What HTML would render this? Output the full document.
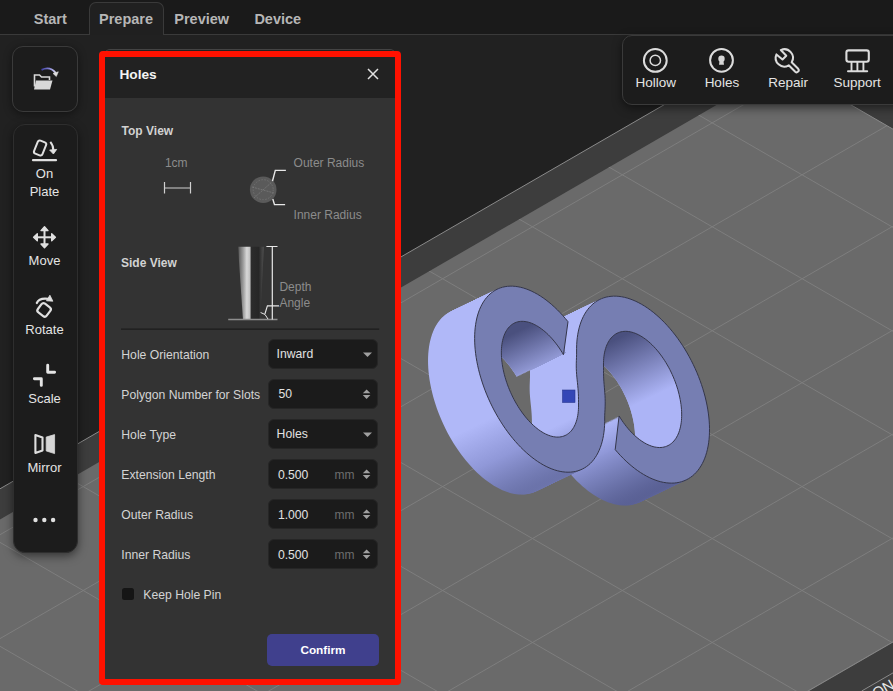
<!DOCTYPE html>
<html><head><meta charset="utf-8">
<style>
*{margin:0;padding:0;box-sizing:border-box}
html,body{width:893px;height:691px;overflow:hidden;background:#212121;font-family:"Liberation Sans",sans-serif}
.a{position:absolute;line-height:1;white-space:nowrap}
#hdr{position:absolute;left:0;top:0;width:893px;height:35px;background:#1a1a1a;border-bottom:1px solid #3a3a3a}
#tabp{position:absolute;left:89px;top:2px;width:75px;height:33px;background:#202020;border:1px solid #3a3a3a;border-bottom:none;border-radius:7px 7px 0 0}
.tab{font-size:14.5px;font-weight:bold;color:#b6b6b6;top:11.6px}
#openbtn{position:absolute;left:12px;top:46px;width:66px;height:66px;background:#1c1c1c;border:1px solid #3a3a3a;border-radius:11px;box-shadow:0 2px 8px rgba(0,0,0,.45)}
#tools{position:absolute;left:12.5px;top:124px;width:65px;height:429px;background:#1c1c1c;border:1px solid #2e2e2e;border-radius:12px;box-shadow:0 3px 10px rgba(0,0,0,.5)}
.tl{font-size:13px;color:#e4e4e4;left:12px;width:65px;text-align:center}
#rtool{position:absolute;left:622px;top:35px;width:290px;height:70px;background:#1c1c1c;border:1px solid #3a3a3a;border-radius:10px;box-shadow:0 3px 10px rgba(0,0,0,.5)}
.rl{font-size:13.5px;color:#e4e4e4;top:76.2px;width:60px;text-align:center}
#dlg{position:absolute;left:104px;top:49px;width:292px;height:634px;background:#333;border:1px solid #444;border-radius:6px;overflow:hidden}
#dlgh{position:absolute;left:0;top:0;width:100%;height:48px;background:#222}
#red{position:absolute;left:99px;top:51px;width:302px;height:634px;border:6px solid #ff1100;border-radius:4px}
.sec{font-size:12px;font-weight:bold;color:#d2d2d2}
.dim{font-size:12px;color:#8c8c8c}
.lab{font-size:12.2px;color:#d4d4d4;left:121.3px}
.box{position:absolute;left:268px;width:110px;height:30px;background:#1b1b1b;border-radius:6px;border:1px solid #262626}
.val{font-size:12.2px;color:#e2e2e2}
.mm{font-size:12px;color:#6e6e6e;left:334.6px}
</style></head><body>
<svg id="scene" width="893" height="691" viewBox="0 0 893 691" style="position:absolute;left:0;top:0"><polygon points="783.9,35.5 0.0,488.8 0.0,691.0 893.0,691.0 893.0,98.6" fill="#3d3d3d"/><polygon points="783.9,66.1 0.0,519.4 0.0,691.0 808.2,691.0 893.0,642.0 893.0,129.2" fill="#6a6a6a"/><clipPath id="pc"><polygon points="783.9,66.1 0.0,519.4 0.0,691.0 808.2,691.0 893.0,642.0 893.0,129.2"/></clipPath><g clip-path="url(#pc)" stroke="#7e7e7e" stroke-width="1"><line x1="0.0" y1="-1224.2" x2="893.0" y2="-707.9"/><line x1="0.0" y1="-504.5" x2="893.0" y2="-1020.9"/><line x1="0.0" y1="-1120.3" x2="893.0" y2="-603.9"/><line x1="0.0" y1="-400.6" x2="893.0" y2="-917.0"/><line x1="0.0" y1="-1016.4" x2="893.0" y2="-500.0"/><line x1="0.0" y1="-296.7" x2="893.0" y2="-813.0"/><line x1="0.0" y1="-912.5" x2="893.0" y2="-396.1"/><line x1="0.0" y1="-192.8" x2="893.0" y2="-709.1"/><line x1="0.0" y1="-808.5" x2="893.0" y2="-292.2"/><line x1="0.0" y1="-88.8" x2="893.0" y2="-605.2"/><line x1="0.0" y1="-704.6" x2="893.0" y2="-188.3"/><line x1="0.0" y1="15.1" x2="893.0" y2="-501.3"/><line x1="0.0" y1="-600.7" x2="893.0" y2="-84.3"/><line x1="0.0" y1="119.0" x2="893.0" y2="-397.4"/><line x1="0.0" y1="-496.8" x2="893.0" y2="19.6"/><line x1="0.0" y1="222.9" x2="893.0" y2="-293.4"/><line x1="0.0" y1="-392.9" x2="893.0" y2="123.5"/><line x1="0.0" y1="326.8" x2="893.0" y2="-189.5"/><line x1="0.0" y1="-288.9" x2="893.0" y2="227.4"/><line x1="0.0" y1="430.8" x2="893.0" y2="-85.6"/><line x1="0.0" y1="-185.0" x2="893.0" y2="331.3"/><line x1="0.0" y1="534.7" x2="893.0" y2="18.3"/><line x1="0.0" y1="-81.1" x2="893.0" y2="435.3"/><line x1="0.0" y1="638.6" x2="893.0" y2="122.2"/><line x1="0.0" y1="22.8" x2="893.0" y2="539.2"/><line x1="0.0" y1="742.5" x2="893.0" y2="226.2"/><line x1="0.0" y1="126.7" x2="893.0" y2="643.1"/><line x1="0.0" y1="846.4" x2="893.0" y2="330.1"/><line x1="0.0" y1="230.7" x2="893.0" y2="747.0"/><line x1="0.0" y1="950.4" x2="893.0" y2="434.0"/><line x1="0.0" y1="334.6" x2="893.0" y2="850.9"/><line x1="0.0" y1="1054.3" x2="893.0" y2="537.9"/><line x1="0.0" y1="438.5" x2="893.0" y2="954.9"/><line x1="0.0" y1="1158.2" x2="893.0" y2="641.8"/><line x1="0.0" y1="542.4" x2="893.0" y2="1058.8"/><line x1="0.0" y1="1262.1" x2="893.0" y2="745.8"/><line x1="0.0" y1="646.3" x2="893.0" y2="1162.7"/><line x1="0.0" y1="1366.0" x2="893.0" y2="849.7"/><line x1="0.0" y1="750.3" x2="893.0" y2="1266.6"/><line x1="0.0" y1="1470.0" x2="893.0" y2="953.6"/><line x1="0.0" y1="854.2" x2="893.0" y2="1370.5"/><line x1="0.0" y1="1573.9" x2="893.0" y2="1057.5"/><line x1="0.0" y1="958.1" x2="893.0" y2="1474.5"/><line x1="0.0" y1="1677.8" x2="893.0" y2="1161.4"/><line x1="0.0" y1="1062.0" x2="893.0" y2="1578.4"/><line x1="0.0" y1="1781.7" x2="893.0" y2="1265.4"/><line x1="0.0" y1="1165.9" x2="893.0" y2="1682.3"/><line x1="0.0" y1="1885.6" x2="893.0" y2="1369.3"/></g><line x1="0.0" y1="488.8" x2="783.9" y2="35.5" stroke="#8a8a8a" stroke-width="1"/><line x1="808.2" y1="691.0" x2="893.0" y2="642.0" stroke="#858585" stroke-width="1"/><line x1="783.9" y1="66.1" x2="893.0" y2="129.2" stroke="#8a8a8a" stroke-width="1"/><line x1="861.7" y1="691.0" x2="893.0" y2="672.9" stroke="#8a8a8a" stroke-width="1"/><text x="0" y="0" transform="translate(876,699) rotate(-30)" font-family="Liberation Sans" font-size="15" fill="#e8e8e8">ON</text><defs><path id="ff" d="M568.00,321.71 L565.40,318.55 L562.75,315.51 L560.06,312.59 L557.33,309.79 L554.56,307.14 L551.76,304.62 L548.94,302.25 L546.10,300.02 L543.25,297.95 L540.40,296.04 L537.54,294.28 L534.68,292.69 L531.84,291.27 L529.01,290.01 L526.20,288.93 L523.42,288.03 L520.66,287.30 L517.95,286.74 L515.28,286.37 L512.65,286.17 L510.08,286.16 L507.56,286.32 L505.11,286.66 L502.72,287.19 L500.40,287.89 L498.16,288.76 L496.00,289.81 L493.93,291.04 L491.94,292.43 L490.04,293.99 L488.24,295.72 L486.54,297.61 L484.95,299.65 L483.45,301.85 L482.07,304.20 L480.80,306.69 L479.64,309.32 L478.60,312.09 L477.67,314.99 L476.87,318.01 L476.19,321.15 L475.63,324.40 L475.19,327.76 L474.88,331.22 L474.69,334.76 L474.63,338.40 L474.70,342.11 L474.88,345.90 L475.20,349.75 L475.64,353.66 L476.20,357.61 L476.89,361.61 L477.70,365.64 L478.62,369.70 L479.67,373.78 L480.83,377.86 L482.10,381.95 L483.49,386.04 L484.98,390.11 L486.58,394.16 L488.29,398.18 L490.09,402.16 L491.99,406.10 L493.98,409.99 L496.05,413.82 L498.22,417.58 L500.46,421.26 L502.78,424.87 L505.17,428.39 L507.62,431.81 L510.14,435.13 L512.71,438.34 L515.34,441.44 L518.02,444.42 L520.73,447.27 L523.48,449.99 L526.27,452.57 L529.08,455.01 L531.91,457.31 L534.75,459.45 L537.61,461.44 L540.47,463.27 L543.32,464.94 L546.17,466.44 L549.01,467.78 L551.83,468.94 L554.63,469.93 L557.39,470.74 L560.13,471.38 L562.82,471.83 L565.47,472.11 L568.07,472.21 L570.61,472.13 L573.10,471.87 L575.52,471.44 L577.87,470.82 L580.14,470.03 L582.34,469.06 L584.46,467.91 L586.49,466.60 L588.43,465.12 L590.27,463.47 L592.02,461.65 L593.66,459.68 L595.20,457.56 L596.64,455.28 L597.96,452.85 L599.17,450.28 L600.27,447.58 L601.25,444.74 L602.11,441.78 L602.85,438.69 L603.47,435.49 L603.96,432.18 L604.33,428.77 L604.58,425.27 L604.70,421.67 L604.70,417.99 L604.72,415.21 L604.85,412.42 L605.00,409.63 L605.12,406.84 L605.20,404.05 L605.20,401.26 L605.14,398.47 L605.00,395.68 L604.81,392.89 L604.59,390.11 L604.35,387.32 L604.11,384.53 L603.90,381.74 L603.72,378.95 L603.60,376.16 L603.53,373.37 L603.50,370.58 L603.50,367.79 L603.49,365.00 L603.49,362.72 L603.58,360.49 L603.73,358.32 L603.96,356.21 L604.27,354.16 L604.64,352.17 L605.09,350.26 L605.62,348.42 L606.21,346.66 L606.87,344.99 L607.60,343.39 L608.39,341.89 L609.26,340.48 L610.18,339.15 L611.17,337.93 L612.22,336.80 L613.32,335.78 L614.48,334.85 L615.70,334.03 L616.96,333.32 L618.28,332.71 L619.64,332.22 L621.04,331.83 L622.49,331.55 L623.97,331.38 L625.49,331.32 L627.04,331.37 L628.63,331.54 L630.23,331.81 L631.87,332.20 L633.52,332.69 L635.19,333.29 L636.87,334.00 L638.57,334.81 L640.27,335.73 L641.98,336.76 L643.69,337.88 L645.39,339.10 L647.09,340.41 L648.79,341.82 L650.47,343.32 L652.13,344.91 L653.78,346.59 L655.40,348.34 L657.00,350.18 L658.58,352.09 L660.12,354.07 L661.63,356.11 L663.10,358.22 L664.54,360.39 L665.93,362.62 L667.28,364.90 L668.58,367.22 L669.83,369.59 L671.03,371.99 L672.17,374.43 L673.26,376.90 L674.29,379.39 L675.26,381.90 L676.16,384.42 L677.01,386.95 L677.78,389.49 L678.49,392.03 L679.13,394.56 L679.70,397.08 L680.20,399.59 L680.63,402.08 L680.99,404.55 L681.27,406.98 L681.48,409.38 L681.61,411.75 L681.67,414.07 L681.66,416.35 L681.57,418.57 L681.40,420.74 L681.17,422.84 L680.85,424.89 L680.47,426.86 L680.01,428.77 L679.48,430.60 L678.89,432.35 L678.22,434.02 L677.48,435.60 L676.68,437.10 L675.81,438.50 L674.88,439.81 L673.89,441.03 L672.83,442.15 L671.72,443.16 L670.56,444.07 L669.34,444.88 L668.07,445.59 L666.75,446.18 L665.38,446.67 L663.97,447.05 L662.52,447.32 L661.03,447.47 L659.51,447.52 L657.95,447.46 L656.37,447.28 L654.76,447.00 L653.12,446.60 L651.47,446.10 L649.80,445.48 L648.11,444.76 L646.42,443.94 L644.71,443.01 L643.01,441.98 L641.30,440.85 L639.59,439.62 L637.89,438.29 L636.20,436.87 L634.52,435.36 L632.86,433.76 L631.21,432.08 L629.59,430.32 L627.99,428.48 L626.42,426.56 L624.88,424.57 L623.38,422.52 L621.91,420.40 L620.48,418.23 L619.09,415.99 L615.21,449.63 L617.88,452.71 L620.60,455.68 L623.36,458.51 L626.16,461.22 L629.00,463.79 L631.86,466.21 L634.74,468.49 L637.64,470.62 L640.54,472.59 L643.46,474.40 L646.37,476.05 L649.28,477.53 L652.17,478.84 L655.05,479.99 L657.90,480.96 L660.73,481.75 L663.52,482.37 L666.27,482.80 L668.98,483.06 L671.63,483.14 L674.23,483.05 L676.78,482.77 L679.25,482.31 L681.66,481.67 L684.00,480.86 L686.25,479.87 L688.42,478.71 L690.51,477.38 L692.50,475.88 L694.40,474.21 L696.20,472.38 L697.90,470.39 L699.49,468.25 L700.97,465.96 L702.35,463.52 L703.61,460.93 L704.75,458.21 L705.77,455.36 L706.68,452.39 L707.46,449.29 L708.11,446.07 L708.65,442.75 L709.05,439.33 L709.33,435.81 L709.48,432.20 L709.51,428.52 L709.41,424.75 L709.18,420.92 L708.82,417.03 L708.33,413.09 L707.72,409.10 L706.99,405.07 L706.13,401.01 L705.16,396.94 L704.06,392.85 L702.84,388.75 L701.51,384.65 L700.07,380.56 L698.52,376.50 L696.86,372.45 L695.10,368.44 L693.24,364.47 L691.28,360.55 L689.23,356.68 L687.09,352.88 L684.87,349.15 L682.57,345.50 L680.19,341.93 L677.74,338.45 L675.22,335.07 L672.64,331.80 L670.00,328.63 L667.31,325.59 L664.58,322.66 L661.80,319.87 L658.99,317.21 L656.15,314.69 L653.28,312.31 L650.39,310.08 L647.49,308.01 L644.58,306.09 L641.66,304.33 L638.75,302.74 L635.85,301.31 L632.96,300.05 L630.09,298.97 L627.25,298.05 L624.43,297.32 L621.65,296.76 L618.92,296.38 L616.22,296.18 L613.59,296.16 L611.00,296.32 L608.48,296.66 L606.03,297.17 L603.64,297.87 L601.33,298.74 L599.11,299.78 L596.96,301.00 L594.91,302.39 L592.94,303.95 L591.08,305.67 L589.31,307.55 L587.65,309.59 L586.09,311.78 L584.64,314.13 L583.31,316.61 L582.09,319.24 L580.98,322.01 L580.00,324.90 L579.14,327.92 L578.40,331.05 L577.78,334.30 L577.29,337.66 L576.92,341.12 L576.69,344.66 L576.58,348.30 L576.60,352.01 L576.58,354.79 L576.49,357.58 L576.38,360.37 L576.29,363.16 L576.27,365.95 L576.31,368.74 L576.43,371.53 L576.62,374.32 L576.87,377.11 L577.15,379.89 L577.44,382.68 L577.73,385.47 L577.98,388.26 L578.20,391.05 L578.36,393.84 L578.46,396.63 L578.50,399.42 L578.51,402.21 L578.53,404.99 L578.52,407.23 L578.43,409.42 L578.28,411.55 L578.04,413.62 L577.74,415.63 L577.36,417.56 L576.91,419.42 L576.39,421.21 L575.80,422.91 L575.15,424.53 L574.42,426.06 L573.63,427.50 L572.77,428.85 L571.86,430.11 L570.88,431.27 L569.84,432.33 L568.74,433.28 L567.59,434.13 L566.38,434.88 L565.13,435.52 L563.83,436.06 L562.48,436.48 L561.08,436.80 L559.65,437.00 L558.18,437.09 L556.68,437.08 L555.14,436.95 L553.57,436.71 L551.98,436.36 L550.36,435.90 L548.73,435.34 L547.08,434.66 L545.41,433.88 L543.73,433.00 L542.05,432.01 L540.36,430.92 L538.67,429.73 L536.99,428.44 L535.31,427.07 L533.64,425.59 L531.98,424.03 L530.33,422.39 L528.71,420.66 L527.10,418.85 L525.52,416.97 L523.97,415.01 L522.45,412.99 L520.96,410.90 L519.51,408.75 L518.10,406.54 L516.73,404.28 L515.40,401.97 L514.12,399.62 L512.89,397.23 L511.71,394.81 L510.59,392.36 L509.52,389.88 L508.51,387.38 L507.56,384.86 L506.68,382.34 L505.85,379.80 L505.10,377.27 L504.40,374.74 L503.78,372.22 L503.23,369.71 L502.74,367.22 L502.33,364.76 L501.99,362.32 L501.72,359.91 L501.53,357.54 L501.41,355.21 L501.36,352.93 L501.39,350.70 L501.49,348.52 L501.66,346.40 L501.91,344.35 L502.23,342.36 L502.63,340.44 L503.09,338.60 L503.62,336.83 L504.23,335.15 L504.90,333.55 L505.64,332.03 L506.45,330.61 L507.32,329.28 L508.25,328.05 L509.24,326.91 L510.30,325.88 L511.40,324.94 L512.57,324.11 L513.78,323.39 L515.05,322.77 L516.36,322.26 L517.72,321.86 L519.12,321.57 L520.56,321.39 L522.04,321.32 L523.56,321.36 L525.10,321.52 L526.67,321.78 L528.27,322.15 L529.89,322.63 L531.53,323.23 L533.19,323.92 L534.85,324.73 L536.53,325.63 L538.22,326.65 L539.91,327.76 L541.59,328.97 L543.28,330.27 L544.96,331.67 L546.63,333.16 L548.28,334.74 L549.92,336.41 L551.55,338.15 L553.14,339.98 L554.72,341.88 L556.26,343.85 L557.78,345.89 L559.26,347.99 L560.70,350.16 L562.10,352.38 L563.47,354.65 Z"/><linearGradient id="gA" gradientUnits="userSpaceOnUse" x1="0" y1="415" x2="0" y2="492"><stop offset="0" stop-color="#b0b8f8"/><stop offset="0.42" stop-color="#9098d8"/><stop offset="0.7" stop-color="#7078b0"/><stop offset="1" stop-color="#4c5284"/></linearGradient><linearGradient id="gB" gradientUnits="userSpaceOnUse" x1="528" y1="326" x2="548" y2="374"><stop offset="0" stop-color="#4a507e"/><stop offset="1" stop-color="#a8b0f0"/></linearGradient><linearGradient id="gC" gradientUnits="userSpaceOnUse" x1="620" y1="337" x2="648" y2="398"><stop offset="0" stop-color="#4a507e"/><stop offset="1" stop-color="#acb4f6"/></linearGradient><clipPath id="lhc"><path d="M565.35,352.68 L563.88,350.23 L562.36,347.83 L560.81,345.50 L559.21,343.23 L557.57,341.03 L555.91,338.90 L554.21,336.85 L552.48,334.88 L550.73,332.99 L548.96,331.20 L547.17,329.49 L545.37,327.88 L543.56,326.37 L541.74,324.96 L539.92,323.65 L538.10,322.45 L536.28,321.36 L534.47,320.38 L532.66,319.51 L530.88,318.75 L529.11,318.12 L527.36,317.59 L525.63,317.19 L523.94,316.90 L522.27,316.74 L520.63,316.69 L519.04,316.76 L517.48,316.96 L515.97,317.27 L514.50,317.70 L513.08,318.24 L511.72,318.91 L510.40,319.69 L509.15,320.58 L507.95,321.59 L506.81,322.70 L505.74,323.93 L504.73,325.26 L503.79,326.69 L502.92,328.22 L502.12,329.85 L501.39,331.58 L500.73,333.39 L500.16,335.30 L499.65,337.29 L499.23,339.35 L498.88,341.50 L498.61,343.72 L498.42,346.00 L498.31,348.35 L498.27,350.76 L498.32,353.22 L498.45,355.73 L498.66,358.28 L498.94,360.88 L499.31,363.51 L499.75,366.17 L500.27,368.86 L500.87,371.57 L501.54,374.29 L502.28,377.02 L503.10,379.75 L503.98,382.48 L499.82,355.38 L516.87,377.05 Z"/></clipPath><clipPath id="rhc"><path d="M617.68,417.59 L616.26,415.17 L614.89,412.71 L613.57,410.20 L612.31,407.65 L611.10,405.07 L609.95,402.45 L608.87,399.82 L607.85,397.16 L606.90,394.49 L606.01,391.80 L605.20,389.12 L604.45,386.43 L603.78,383.75 L603.18,381.08 L602.66,378.43 L602.21,375.79 L601.84,373.19 L601.55,370.61 L601.33,368.07 L601.19,365.57 L601.14,363.12 L601.16,360.71 L601.26,358.36 L601.44,356.07 L601.69,353.85 L602.03,351.69 L602.44,349.60 L602.93,347.59 L603.49,345.66 L604.13,343.81 L604.84,342.05 L605.63,340.38 L606.48,338.80 L607.40,337.32 L608.39,335.93 L609.45,334.65 L610.56,333.48 L611.74,332.41 L612.98,331.45 L614.27,330.59 L615.62,329.86 L617.02,329.23 L618.47,328.72 L619.96,328.32 L621.50,328.04 L623.07,327.88 L624.69,327.84 L626.34,327.91 L628.01,328.10 L629.72,328.40 L631.45,328.82 L633.20,329.36 L634.97,330.01 L636.76,330.78 L638.55,331.65 L640.36,332.64 L642.16,333.73 L643.97,334.93 L645.78,336.24 L647.58,337.64 L649.36,339.15 L651.14,340.75 L652.90,342.44 L654.64,344.22 L656.36,346.09 L658.05,348.04 L659.72,350.07 L661.35,352.17 L662.94,354.35 L664.49,356.59 L666.01,358.89 L667.48,361.25 L668.90,363.67 L670.27,366.13 L671.59,368.64 L672.85,371.19 L674.06,373.78 L675.20,376.39 L676.29,379.03 L677.31,381.68 L678.26,384.36 L679.15,387.04 L679.96,389.72 L680.71,392.41 L681.38,395.09 L681.98,397.76 L682.50,400.41 L682.95,403.05 L683.32,405.65 L683.61,408.23 L683.83,410.77 L683.96,413.27 L684.02,415.72 L684.00,418.13 L683.90,420.48 L683.72,422.77 L683.46,424.99 L683.13,427.15 L682.72,429.24 L682.23,431.25 L681.66,433.18 L681.02,435.03 L680.31,436.79 L679.53,438.46 L678.68,440.04 L677.75,441.52 L676.76,442.91 L675.71,444.19 L674.59,445.36 L673.41,446.43 L672.18,447.40 L670.88,448.25 L669.53,448.99 L668.14,449.61 L666.69,450.12 L665.20,450.52 L663.66,450.80 L662.08,450.96 L660.47,451.01 L658.82,450.93 L657.14,450.75 L655.44,450.44 L653.71,450.02 L651.95,449.48 L650.18,448.83 L648.40,448.06 L646.60,447.19 L644.80,446.20 L642.99,445.11 L641.19,443.91 L639.38,442.60 L637.58,441.20 L635.79,439.69 L634.01,438.09 L632.25,436.40 L630.51,434.62 L628.80,432.75 L627.10,430.80 L625.44,428.77 L623.81,426.67 L622.22,424.50 L620.66,422.25 L619.15,419.95 L617.68,417.59 Z"/></clipPath></defs><g fill="url(#gA)"><use href="#ff" x="-46.60" y="22.40"/><use href="#ff" x="-45.77" y="22.00"/><use href="#ff" x="-44.94" y="21.60"/><use href="#ff" x="-44.10" y="21.20"/><use href="#ff" x="-43.27" y="20.80"/><use href="#ff" x="-42.44" y="20.40"/><use href="#ff" x="-41.61" y="20.00"/><use href="#ff" x="-40.77" y="19.60"/><use href="#ff" x="-39.94" y="19.20"/><use href="#ff" x="-39.11" y="18.80"/><use href="#ff" x="-38.28" y="18.40"/><use href="#ff" x="-37.45" y="18.00"/><use href="#ff" x="-36.61" y="17.60"/><use href="#ff" x="-35.78" y="17.20"/><use href="#ff" x="-34.95" y="16.80"/><use href="#ff" x="-34.12" y="16.40"/><use href="#ff" x="-33.29" y="16.00"/><use href="#ff" x="-32.45" y="15.60"/><use href="#ff" x="-31.62" y="15.20"/><use href="#ff" x="-30.79" y="14.80"/><use href="#ff" x="-29.96" y="14.40"/><use href="#ff" x="-29.12" y="14.00"/><use href="#ff" x="-28.29" y="13.60"/><use href="#ff" x="-27.46" y="13.20"/><use href="#ff" x="-26.63" y="12.80"/><use href="#ff" x="-25.80" y="12.40"/><use href="#ff" x="-24.96" y="12.00"/><use href="#ff" x="-24.13" y="11.60"/><use href="#ff" x="-23.30" y="11.20"/><use href="#ff" x="-22.47" y="10.80"/><use href="#ff" x="-21.64" y="10.40"/><use href="#ff" x="-20.80" y="10.00"/><use href="#ff" x="-19.97" y="9.60"/><use href="#ff" x="-19.14" y="9.20"/><use href="#ff" x="-18.31" y="8.80"/><use href="#ff" x="-17.48" y="8.40"/><use href="#ff" x="-16.64" y="8.00"/><use href="#ff" x="-15.81" y="7.60"/><use href="#ff" x="-14.98" y="7.20"/><use href="#ff" x="-14.15" y="6.80"/><use href="#ff" x="-13.31" y="6.40"/><use href="#ff" x="-12.48" y="6.00"/><use href="#ff" x="-11.65" y="5.60"/><use href="#ff" x="-10.82" y="5.20"/><use href="#ff" x="-9.99" y="4.80"/><use href="#ff" x="-9.15" y="4.40"/><use href="#ff" x="-8.32" y="4.00"/><use href="#ff" x="-7.49" y="3.60"/><use href="#ff" x="-6.66" y="3.20"/><use href="#ff" x="-5.83" y="2.80"/><use href="#ff" x="-4.99" y="2.40"/><use href="#ff" x="-4.16" y="2.00"/><use href="#ff" x="-3.33" y="1.60"/><use href="#ff" x="-2.50" y="1.20"/><use href="#ff" x="-1.66" y="0.80"/><use href="#ff" x="-0.83" y="0.40"/></g><g clip-path="url(#lhc)"><g fill="url(#gB)"><use href="#ff" x="-46.60" y="22.40"/><use href="#ff" x="-45.77" y="22.00"/><use href="#ff" x="-44.94" y="21.60"/><use href="#ff" x="-44.10" y="21.20"/><use href="#ff" x="-43.27" y="20.80"/><use href="#ff" x="-42.44" y="20.40"/><use href="#ff" x="-41.61" y="20.00"/><use href="#ff" x="-40.77" y="19.60"/><use href="#ff" x="-39.94" y="19.20"/><use href="#ff" x="-39.11" y="18.80"/><use href="#ff" x="-38.28" y="18.40"/><use href="#ff" x="-37.45" y="18.00"/><use href="#ff" x="-36.61" y="17.60"/><use href="#ff" x="-35.78" y="17.20"/><use href="#ff" x="-34.95" y="16.80"/><use href="#ff" x="-34.12" y="16.40"/><use href="#ff" x="-33.29" y="16.00"/><use href="#ff" x="-32.45" y="15.60"/><use href="#ff" x="-31.62" y="15.20"/><use href="#ff" x="-30.79" y="14.80"/><use href="#ff" x="-29.96" y="14.40"/><use href="#ff" x="-29.12" y="14.00"/><use href="#ff" x="-28.29" y="13.60"/><use href="#ff" x="-27.46" y="13.20"/><use href="#ff" x="-26.63" y="12.80"/><use href="#ff" x="-25.80" y="12.40"/><use href="#ff" x="-24.96" y="12.00"/><use href="#ff" x="-24.13" y="11.60"/><use href="#ff" x="-23.30" y="11.20"/><use href="#ff" x="-22.47" y="10.80"/><use href="#ff" x="-21.64" y="10.40"/><use href="#ff" x="-20.80" y="10.00"/><use href="#ff" x="-19.97" y="9.60"/><use href="#ff" x="-19.14" y="9.20"/><use href="#ff" x="-18.31" y="8.80"/><use href="#ff" x="-17.48" y="8.40"/><use href="#ff" x="-16.64" y="8.00"/><use href="#ff" x="-15.81" y="7.60"/><use href="#ff" x="-14.98" y="7.20"/><use href="#ff" x="-14.15" y="6.80"/><use href="#ff" x="-13.31" y="6.40"/><use href="#ff" x="-12.48" y="6.00"/><use href="#ff" x="-11.65" y="5.60"/><use href="#ff" x="-10.82" y="5.20"/><use href="#ff" x="-9.99" y="4.80"/><use href="#ff" x="-9.15" y="4.40"/><use href="#ff" x="-8.32" y="4.00"/><use href="#ff" x="-7.49" y="3.60"/><use href="#ff" x="-6.66" y="3.20"/><use href="#ff" x="-5.83" y="2.80"/><use href="#ff" x="-4.99" y="2.40"/><use href="#ff" x="-4.16" y="2.00"/><use href="#ff" x="-3.33" y="1.60"/><use href="#ff" x="-2.50" y="1.20"/><use href="#ff" x="-1.66" y="0.80"/><use href="#ff" x="-0.83" y="0.40"/></g></g><g clip-path="url(#rhc)"><g fill="url(#gC)"><use href="#ff" x="-46.60" y="22.40"/><use href="#ff" x="-45.77" y="22.00"/><use href="#ff" x="-44.94" y="21.60"/><use href="#ff" x="-44.10" y="21.20"/><use href="#ff" x="-43.27" y="20.80"/><use href="#ff" x="-42.44" y="20.40"/><use href="#ff" x="-41.61" y="20.00"/><use href="#ff" x="-40.77" y="19.60"/><use href="#ff" x="-39.94" y="19.20"/><use href="#ff" x="-39.11" y="18.80"/><use href="#ff" x="-38.28" y="18.40"/><use href="#ff" x="-37.45" y="18.00"/><use href="#ff" x="-36.61" y="17.60"/><use href="#ff" x="-35.78" y="17.20"/><use href="#ff" x="-34.95" y="16.80"/><use href="#ff" x="-34.12" y="16.40"/><use href="#ff" x="-33.29" y="16.00"/><use href="#ff" x="-32.45" y="15.60"/><use href="#ff" x="-31.62" y="15.20"/><use href="#ff" x="-30.79" y="14.80"/><use href="#ff" x="-29.96" y="14.40"/><use href="#ff" x="-29.12" y="14.00"/><use href="#ff" x="-28.29" y="13.60"/><use href="#ff" x="-27.46" y="13.20"/><use href="#ff" x="-26.63" y="12.80"/><use href="#ff" x="-25.80" y="12.40"/><use href="#ff" x="-24.96" y="12.00"/><use href="#ff" x="-24.13" y="11.60"/><use href="#ff" x="-23.30" y="11.20"/><use href="#ff" x="-22.47" y="10.80"/><use href="#ff" x="-21.64" y="10.40"/><use href="#ff" x="-20.80" y="10.00"/><use href="#ff" x="-19.97" y="9.60"/><use href="#ff" x="-19.14" y="9.20"/><use href="#ff" x="-18.31" y="8.80"/><use href="#ff" x="-17.48" y="8.40"/><use href="#ff" x="-16.64" y="8.00"/><use href="#ff" x="-15.81" y="7.60"/><use href="#ff" x="-14.98" y="7.20"/><use href="#ff" x="-14.15" y="6.80"/><use href="#ff" x="-13.31" y="6.40"/><use href="#ff" x="-12.48" y="6.00"/><use href="#ff" x="-11.65" y="5.60"/><use href="#ff" x="-10.82" y="5.20"/><use href="#ff" x="-9.99" y="4.80"/><use href="#ff" x="-9.15" y="4.40"/><use href="#ff" x="-8.32" y="4.00"/><use href="#ff" x="-7.49" y="3.60"/><use href="#ff" x="-6.66" y="3.20"/><use href="#ff" x="-5.83" y="2.80"/><use href="#ff" x="-4.99" y="2.40"/><use href="#ff" x="-4.16" y="2.00"/><use href="#ff" x="-3.33" y="1.60"/><use href="#ff" x="-2.50" y="1.20"/><use href="#ff" x="-1.66" y="0.80"/><use href="#ff" x="-0.83" y="0.40"/></g></g><use href="#ff" fill="#767eb2" stroke="#34364a" stroke-width="1"/><rect x="562.5" y="390" width="12.5" height="12.5" fill="#3446b6" stroke="#2a3890" stroke-width="0.6"/></svg>
<div id="hdr"></div>
<div id="tabp"></div>
<span class="a tab" style="left:33.8px">Start</span>
<span class="a tab" style="left:99px">Prepare</span>
<span class="a tab" style="left:174.3px">Preview</span>
<span class="a tab" style="left:254.4px">Device</span>

<div id="openbtn"></div>
<div id="tools"></div>
<div id="rtool"></div>

<svg width="893" height="691" style="position:absolute;left:0;top:0">
 <defs>
  <linearGradient id="arr" x1="0" y1="0" x2="1" y2="0"><stop offset="0" stop-color="#3c3ca0"/><stop offset="0.6" stop-color="#8a8ad8"/><stop offset="1" stop-color="#dcdcf0"/></linearGradient>
 </defs>
 <!-- open icon -->
 <path d="M34.5,86.5 V75 h5 l2,2 h8 v3" fill="none" stroke="#d8d8d8" stroke-width="1.6"/>
 <path d="M36,80.5 H52.5 L50,89.5 H34 Z" fill="#d8d8d8"/>
 <path d="M41.5,69.8 Q50,65.8 55.8,73" fill="none" stroke="url(#arr)" stroke-width="1.9"/>
 <path d="M53,73.4 L58.3,71.8 L56.3,76.5 Z" fill="#dcdcdc" stroke="#dcdcdc" stroke-width="0.6" stroke-linejoin="round"/>
 <!-- on plate -->
 <rect x="35.6" y="141" width="9" height="14" rx="2.2" transform="rotate(22 40.1 148)" fill="none" stroke="#e0e0e0" stroke-width="2"/>
 <path d="M50.3,141.8 Q53.5,145.5 53.3,150.5" fill="none" stroke="#e0e0e0" stroke-width="2"/>
 <path d="M49.6,150 L56.7,149.4 L53.4,154 Z" fill="#e0e0e0" stroke="#e0e0e0" stroke-width="0.8" stroke-linejoin="round"/>
 <line x1="33" y1="160.2" x2="56" y2="160.2" stroke="#e0e0e0" stroke-width="2.2" stroke-linecap="round"/>
 <!-- move -->
 <g stroke="#e0e0e0" fill="#e0e0e0" stroke-linejoin="round">
  <line x1="44.5" y1="229" x2="44.5" y2="246" stroke-width="2"/><line x1="35" y1="237.3" x2="54" y2="237.3" stroke-width="2"/>
  <path d="M41,230.6 L44.5,226.8 L48,230.6 Z" stroke-width="1.4"/>
  <path d="M41,244 L44.5,247.8 L48,244 Z" stroke-width="1.4"/>
  <path d="M37.3,233.8 L33.6,237.3 L37.3,240.8 Z" stroke-width="1.4"/>
  <path d="M51.7,233.8 L55.4,237.3 L51.7,240.8 Z" stroke-width="1.4"/>
 </g>
 <!-- rotate -->
 <rect x="38.6" y="304.4" width="11" height="11" rx="2.5" transform="rotate(37 44.1 309.9)" fill="none" stroke="#e0e0e0" stroke-width="2.2"/>
 <path d="M36.8,303 Q39,297.5 48.5,298.8" fill="none" stroke="#e0e0e0" stroke-width="2.2" stroke-linecap="round"/>
 <path d="M46.5,300.8 L49.9,295.2 L52.9,301.2 Z" fill="#e0e0e0" stroke="#e0e0e0" stroke-width="0.8" stroke-linejoin="round"/>
 <!-- scale -->
 <path d="M47.7,365.2 V372.3 H54.6" fill="none" stroke="#e4e4e4" stroke-width="2.9" stroke-linecap="round" stroke-linejoin="round"/>
 <path d="M34.4,378.7 H41.3 V385.4" fill="none" stroke="#e4e4e4" stroke-width="2.9" stroke-linecap="round" stroke-linejoin="round"/>
 <!-- mirror -->
 <path d="M35.4,435 L42.5,437.6 V450.4 L35.4,453 Z" fill="none" stroke="#dedede" stroke-width="2.1" stroke-linejoin="round"/>
 <path d="M46.2,437.1 L54.6,434.6 V453.6 L46.2,450.9 Z" fill="#d6d6d6" stroke="#d6d6d6" stroke-width="0.8" stroke-linejoin="round"/>
 <circle cx="35.5" cy="520" r="2.2" fill="#e0e0e0"/><circle cx="44.3" cy="520" r="2.2" fill="#e0e0e0"/><circle cx="53.1" cy="520" r="2.2" fill="#e0e0e0"/>
 <!-- right toolbar icons -->
 <circle cx="655.3" cy="60.4" r="11.4" fill="none" stroke="#dcdcdc" stroke-width="2"/>
 <circle cx="655.3" cy="60.4" r="5.2" fill="none" stroke="#dcdcdc" stroke-width="1.5"/>
 <circle cx="721.5" cy="60.3" r="11.4" fill="none" stroke="#dcdcdc" stroke-width="2"/>
 <circle cx="721.5" cy="58.7" r="3.2" fill="#d6d6d6"/>
 <path d="M719.7,60 L719,64.8 H724 L723.3,60 Z" fill="#d6d6d6"/>
 <path d="M780.8,50.04 A8.6,8.6 0 0 1 791.68,62.32 L798.18,68.82 A2.1,2.1 0 0 1 795.22,71.78 L788.72,65.28 A8.6,8.6 0 0 1 776.44,54.4 L782.5,59.5 L786.3,55.7 Z" fill="none" stroke="#dcdcdc" stroke-width="2" stroke-linejoin="round"/>
 <rect x="846.4" y="50.4" width="22.4" height="11.4" rx="2.2" fill="none" stroke="#dcdcdc" stroke-width="2.1"/>
 <line x1="851.5" y1="61.5" x2="851.5" y2="71" stroke="#dcdcdc" stroke-width="1.9"/>
 <line x1="857.4" y1="61.5" x2="857.4" y2="71" stroke="#dcdcdc" stroke-width="1.9"/>
 <line x1="863.4" y1="61.5" x2="863.4" y2="71" stroke="#dcdcdc" stroke-width="1.9"/>
 <line x1="848" y1="71.2" x2="867.2" y2="71.2" stroke="#dcdcdc" stroke-width="2" stroke-linecap="round"/>
</svg>

<span class="a tl" style="top:166.8px">On</span>
<span class="a tl" style="top:184.8px">Plate</span>
<span class="a tl" style="top:253.5px">Move</span>
<span class="a tl" style="top:322.6px">Rotate</span>
<span class="a tl" style="top:391.5px">Scale</span>
<span class="a tl" style="top:461px">Mirror</span>

<span class="a rl" style="left:625.7px">Hollow</span>
<span class="a rl" style="left:691.9px">Holes</span>
<span class="a rl" style="left:758.1px">Repair</span>
<span class="a rl" style="left:827.2px">Support</span>

<div id="dlg"><div id="dlgh"></div></div>
<span class="a" style="left:119.4px;top:68.4px;font-size:13.7px;font-weight:bold;color:#f4f4f4">Holes</span>
<svg width="893" height="691" style="position:absolute;left:0;top:0">
 <path d="M368,69 L378,79 M378,69 L368,79" stroke="#e0e0e0" stroke-width="1.5"/>
 <!-- scale bar -->
 <path d="M164.5,182 V193.5 M190.5,182 V193.5 M164.5,188 H190.5" stroke="#d0d0d0" stroke-width="1.2" fill="none"/>
 <!-- circle -->
 <circle cx="263.2" cy="189.7" r="13.3" fill="#5a5a5a"/>
 <circle cx="263.2" cy="189.7" r="10" fill="none" stroke="#7a7a7a" stroke-width="0.7" stroke-dasharray="1.5 1.5"/>
 <path d="M254,198 L272.5,181.5 M252,187 L274,193" stroke="#7e7e7e" stroke-width="0.7" stroke-dasharray="2 1"/>
 <path d="M285.9,170.4 H275.3 L272.5,181" fill="none" stroke="#e8e8e8" stroke-width="1.4"/>
 <path d="M272.8,199 L274.5,204.6 H285.1" fill="none" stroke="#e8e8e8" stroke-width="1.4"/>
 <!-- side view -->
 <defs>
  <linearGradient id="cyl" x1="0" y1="0" x2="1" y2="0">
   <stop offset="0" stop-color="#404040"/><stop offset="0.06" stop-color="#6a6a6a"/><stop offset="0.2" stop-color="#9c9c9c"/><stop offset="0.34" stop-color="#d8d8d8"/><stop offset="0.47" stop-color="#bdbdbd"/><stop offset="0.5" stop-color="#2c2c2c"/><stop offset="0.8" stop-color="#262626"/><stop offset="0.9" stop-color="#3c3c3c"/><stop offset="1" stop-color="#505050"/>
  </linearGradient>
 </defs>
 <path d="M238,246.8 H263.9 L260.2,320 H243 Z" fill="url(#cyl)"/>
 <line x1="228.2" y1="319.5" x2="277.5" y2="319.5" stroke="#8e8e8e" stroke-width="1.3"/>
 <path d="M266.4,246.5 H277.5 M272.3,246.5 V319.5" stroke="#e8e8e8" stroke-width="1.2" fill="none"/>
 <path d="M279,305.9 H267.4 L264.9,314" stroke="#e8e8e8" stroke-width="1.1" fill="none"/>
 <path d="M260.6,312.5 L265,314.5 L268,319" stroke="#e8e8e8" stroke-width="1" fill="none"/>
 <line x1="121" y1="329.2" x2="379.2" y2="329.2" stroke="#1c1c1c" stroke-width="1.3"/>
</svg>
<span class="a sec" style="left:121.6px;top:124.6px">Top View</span>
<span class="a dim" style="left:164.9px;top:156.6px">1cm</span>
<span class="a dim" style="left:293.6px;top:156.6px">Outer Radius</span>
<span class="a dim" style="left:293.6px;top:208.5px">Inner Radius</span>
<span class="a sec" style="left:121px;top:256.8px">Side View</span>
<span class="a dim" style="left:279.4px;top:281px">Depth</span>
<span class="a dim" style="left:279.4px;top:297px">Angle</span>

<span class="a lab" style="top:348.8px">Hole Orientation</span>
<span class="a lab" style="top:388.6px">Polygon Number for Slots</span>
<span class="a lab" style="top:428.6px">Hole Type</span>
<span class="a lab" style="top:468.6px">Extension Length</span>
<span class="a lab" style="top:508.6px">Outer Radius</span>
<span class="a lab" style="top:548.6px">Inner Radius</span>

<div class="box" style="top:339px"></div>
<div class="box" style="top:379px"></div>
<div class="box" style="top:419px"></div>
<div class="box" style="top:459px"></div>
<div class="box" style="top:499px"></div>
<div class="box" style="top:539px"></div>
<span class="a val" style="left:276.6px;top:348.3px">Inward</span>
<span class="a val" style="left:278.5px;top:388.3px">50</span>
<span class="a val" style="left:276.6px;top:428.3px">Holes</span>
<span class="a val" style="left:277.9px;top:468.9px">0.500</span>
<span class="a val" style="left:277.9px;top:508.9px">1.000</span>
<span class="a val" style="left:277.9px;top:548.9px">0.500</span>
<span class="a mm" style="top:469px">mm</span>
<span class="a mm" style="top:509px">mm</span>
<span class="a mm" style="top:549px">mm</span>
<svg width="893" height="691" style="position:absolute;left:0;top:0" fill="#a0a0a0">
 <path d="M363,352.5 H372 L367.5,357 Z"/>
 <path d="M363,432.5 H372 L367.5,437 Z"/>
 <path d="M362.8,393.3 H370.4 L366.6,389.4 Z M362.8,395.1 H370.4 L366.6,399 Z"/>
 <path d="M362.8,473.3 H370.4 L366.6,469.4 Z M362.8,475.1 H370.4 L366.6,479 Z"/>
 <path d="M362.8,513.3 H370.4 L366.6,509.4 Z M362.8,515.1 H370.4 L366.6,519 Z"/>
 <path d="M362.8,553.3 H370.4 L366.6,549.4 Z M362.8,555.1 H370.4 L366.6,559 Z"/>
 <rect x="122" y="588" width="12" height="12" rx="2.5" fill="#151515"/>
 <rect x="267" y="634" width="112" height="32" rx="5" fill="#40408d"/>
</svg>
<span class="a" style="left:143.3px;top:588.6px;font-size:12.2px;color:#d4d4d4">Keep Hole Pin</span>
<span class="a" style="left:267px;width:112px;text-align:center;top:645.3px;font-size:11.8px;font-weight:bold;color:#fff">Confirm</span>
<div id="red"></div>
</body></html>
